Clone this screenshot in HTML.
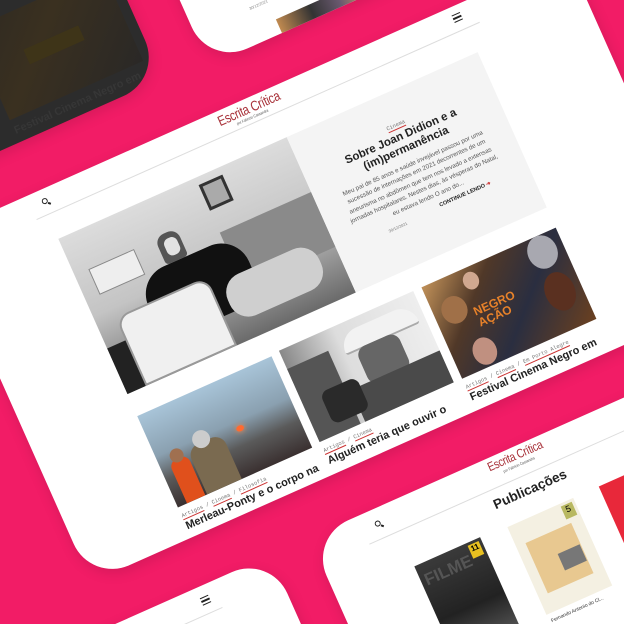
<!DOCTYPE html>
<html><head><meta charset="utf-8"><style>
*{margin:0;padding:0;box-sizing:border-box}
html,body{width:624px;height:624px;overflow:hidden;background:#F21C66}
body{position:relative;font-family:"Liberation Sans",sans-serif}
.clip{position:absolute;left:0;top:0;width:624px;height:624px;overflow:hidden}
.stage{position:absolute;left:0;top:0;width:624px;height:624px;transform:rotate(-24deg);transform-origin:312px 312px}
.card{position:absolute;background:#fff;border-radius:42px;overflow:hidden;box-shadow:0 4px 14px rgba(0,0,0,.12)}
.abs{position:absolute}
.logo{position:absolute;color:#a8323a;font-size:14px;letter-spacing:-.4px;white-space:nowrap;text-align:center;line-height:14px;transform:scaleX(.82)}
.logo small{display:block;font-size:4px;color:#555;line-height:5px;letter-spacing:0}
.line{position:absolute;height:1px;background:#ddd}
.tag{font-size:5.5px;color:#777;white-space:nowrap;font-family:"Liberation Mono",monospace}
.tag u{text-decoration:none;border-bottom:1px solid #c33}
.ttl{font-weight:bold;font-size:11px;color:#222;white-space:nowrap;overflow:hidden}
.ham{position:absolute;width:9px;height:8px;border-top:1.5px solid #222;border-bottom:1.5px solid #222}
.ham:after{content:"";position:absolute;left:0;right:0;top:2px;height:1.5px;background:#222}
.srch{position:absolute;width:6px;height:6px;border:1.6px solid #222;border-radius:50%}
.srch:after{content:"";position:absolute;width:3px;height:1.6px;background:#222;left:4px;top:5px;transform:rotate(45deg)}
</style></head><body>
<div class="clip">
<div class="stage">

<div class="card" style="left:-260px;top:-320px;width:530px;height:358px;background:#2c2c2c">
  <div class="abs" style="left:374px;top:235px;width:146px;height:99px;background:linear-gradient(135deg,#2f2a22,#3a3020 40%,#2a2826)"></div>
  <div class="abs" style="left:415px;top:275px;width:60px;height:16px;background:#3e3418"></div>
  <div class="abs ttl" style="left:374px;top:340px;color:#363636">Festival Cinema Negro em</div>
</div>

<div class="card" style="left:318px;top:-320px;width:380px;height:365px">
  <div class="abs" style="left:60px;top:327px;font-size:4px;color:#888">30/12/2021</div>
  <div class="abs" style="left:80px;top:350px;width:120px;height:20px;background:linear-gradient(90deg,#c08a50,#333 30%,#6a5a70 55%,#d0a060 80%,#333)"></div>
</div>

<div class="card" style="left:0;top:90px;width:690px;height:379px">
  <div class="srch" style="left:110px;top:9px"></div>
  <div class="logo" style="left:292px;top:3px;width:90px">Escrita Crítica<small>por Fabricio Cassandra</small></div>
  <div class="ham" style="left:560px;top:8px"></div>
  <div class="line" style="left:98px;top:25px;width:485px"></div>

  <div class="abs" style="left:110px;top:52px;width:250px;height:170px;overflow:hidden;background:linear-gradient(180deg,#dcdcdc,#c4c4c4 50%,#6a6a6a)">
    <div class="abs" style="left:150px;top:8px;width:26px;height:28px;border:3px solid #333;background:#aaa"></div>
    <div class="abs" style="left:15px;top:40px;width:50px;height:28px;background:#eee;border:1px solid #888"></div>
    <div class="abs" style="left:150px;top:60px;width:100px;height:60px;background:#8a8a8a"></div>
    <div class="abs" style="left:88px;top:38px;width:24px;height:30px;background:#555;border-radius:10px 10px 4px 4px"></div>
    <div class="abs" style="left:94px;top:44px;width:14px;height:18px;background:#e2e2e2;border-radius:6px"></div>
    <div class="abs" style="left:55px;top:68px;width:110px;height:70px;background:#111;border-radius:30px 30px 10px 10px"></div>
    <div class="abs" style="left:20px;top:95px;width:100px;height:75px;background:#f0f0f0;border-radius:14px 14px 0 0;border:2px solid #999"></div>
    <div class="abs" style="left:130px;top:105px;width:100px;height:45px;background:#cfcfcf;border-radius:20px"></div>
    <div class="abs" style="left:0;top:120px;width:20px;height:50px;background:#222"></div>
  </div>
  <div class="abs" style="left:360px;top:52px;width:209px;height:170px;background:#f4f4f4;text-align:center">
    <div class="tag" style="margin-top:30px"><u>Cinema</u></div>
    <div style="font-weight:bold;font-size:11.5px;color:#222;line-height:13px;margin-top:3px">Sobre Joan Didion e a<br>(im)permanência</div>
    <div style="font-size:6.3px;color:#555;line-height:9.4px;margin:5px 20px 0">Meu pai de 85 anos e saúde invejável passou por uma sucessão de internações em 2021 decorrentes de um aneurisma no abdômen que tem nos levado a extensas jornadas hospitalares. Nestes dias, às vésperas do Natal, eu estava lendo O ano do...</div>
    <div style="font-size:5.5px;margin-top:4px;position:relative;height:10px"><span style="position:absolute;left:55px;top:3px;font-size:4px;color:#777">30/12/2021</span><span style="position:absolute;left:112px;font-weight:bold;color:#222">CONTINUE LENDO <span style="color:#c33">➔</span></span></div>
  </div>

  <div class="abs" style="left:110px;top:246px;width:147px;height:100px;overflow:hidden;background:linear-gradient(180deg,#a8c4d8,#8aa0b0 45%,#5a5a5a 70%,#3a3030)">
    <div class="abs" style="left:85px;top:50px;width:8px;height:6px;background:#ff6a30;border-radius:50%;box-shadow:0 0 6px #f84"></div>
    <div class="abs" style="left:10px;top:55px;width:20px;height:45px;background:#e0501c;border-radius:8px 8px 0 0"></div>
    <div class="abs" style="left:13px;top:45px;width:14px;height:14px;background:#a07050;border-radius:50%"></div>
    <div class="abs" style="left:32px;top:50px;width:38px;height:50px;background:#7a6a50;border-radius:12px 12px 0 0"></div>
    <div class="abs" style="left:40px;top:38px;width:18px;height:18px;background:#ccc;border-radius:50%"></div>
  </div>
  <div class="tag abs" style="left:110px;top:352px"><u>Artigos</u> / <u>Cinema</u> / <u>Filosofia</u></div>
  <div class="ttl abs" style="left:110px;top:361px;width:150px">Merleau-Ponty e o corpo na</div>

  <div class="abs" style="left:266px;top:244px;width:147px;height:100px;overflow:hidden;background:linear-gradient(90deg,#888,#ddd 40%,#eee)">
    <div class="abs" style="left:0;top:20px;width:45px;height:80px;background:#555"></div>
    <div class="abs" style="left:60px;top:10px;width:80px;height:22px;background:#f2f2f2;border-radius:40px 40px 6px 6px;border-bottom:2px solid #aaa"></div>
    <div class="abs" style="left:70px;top:30px;width:45px;height:40px;background:#666;border-radius:10px"></div>
    <div class="abs" style="left:50px;top:65px;width:97px;height:35px;background:#4a4a4a"></div>
    <div class="abs" style="left:20px;top:55px;width:40px;height:35px;background:#2a2a2a;border-radius:8px"></div>
  </div>
  <div class="tag abs" style="left:266px;top:350px"><u>Artigos</u> / <u>Cinema</u></div>
  <div class="ttl abs" style="left:266px;top:359px;width:147px">Alguém teria que ouvir o</div>

  <div class="abs" style="left:422px;top:244px;width:147px;height:100px;overflow:hidden;background:linear-gradient(135deg,#c09058,#503828 30%,#2a2e40 60%,#6a4020)">
    <div class="abs" style="left:8px;top:20px;width:26px;height:28px;background:#a07048;border-radius:50%"></div>
    <div class="abs" style="left:40px;top:5px;width:16px;height:18px;background:#d0a890;border-radius:50%"></div>
    <div class="abs" style="left:110px;top:0;width:30px;height:34px;background:#a8a8b0;border-radius:50%"></div>
    <div class="abs" style="left:110px;top:40px;width:30px;height:40px;background:#5a3020;border-radius:50%"></div>
    <div class="abs" style="left:20px;top:70px;width:24px;height:28px;background:#c09080;border-radius:50%"></div>
    <div class="abs" style="left:38px;top:38px;font-weight:bold;font-size:12px;color:#e8822a;line-height:12px">NEGRO<br>AÇÃO</div>
  </div>
  <div class="tag abs" style="left:422px;top:350px"><u>Artigos</u> / <u>Cinema</u> / <u>Em Porto Alegre</u></div>
  <div class="ttl abs" style="left:422px;top:359px;width:150px">Festival Cinema Negro em</div>
</div>

<div class="card" style="left:-260px;top:517px;width:435px;height:400px">
  <div class="ham" style="left:353px;top:11px"></div>
  <div class="line" style="left:160px;top:28px;width:210px"></div>
</div>

<div class="card" style="left:218px;top:517px;width:680px;height:400px">
  <div class="srch" style="left:65px;top:12px"></div>
  <div class="logo" style="left:176px;top:2px;width:90px;font-size:12.5px">Escrita Crítica<small>por Fabricio Cassandra</small></div>
  <div class="line" style="left:52px;top:30px;width:560px"></div>
  <div class="abs" style="left:166px;top:38px;width:110px;text-align:center;font-weight:bold;font-size:13.5px;color:#222">Publicações</div>
  <div class="abs" style="left:84px;top:69px;width:72px;height:100px;background:linear-gradient(180deg,#3a3a3a,#222 60%,#555)">
    <div class="abs" style="right:3px;top:3px;width:12px;height:14px;background:#e8c020;font-size:8px;font-weight:bold;text-align:center">11</div>
    <div class="abs" style="left:4px;top:8px;font-size:17px;font-weight:bold;color:#555">FILME</div>
  </div>
  <div class="abs" style="left:185px;top:71px;width:72px;height:96px;background:#f4f0e2">
    <div class="abs" style="right:3px;top:3px;width:12px;height:14px;background:#b8b860;font-size:9px;text-align:center">5</div>
    <div class="abs" style="left:10px;top:22px;width:50px;height:55px;background:#e8c890"></div>
    <div class="abs" style="left:35px;top:45px;width:24px;height:18px;background:#777"></div>
  </div>
  <div class="abs" style="left:187px;top:172px;font-size:5px;color:#333;white-space:nowrap">Fernando Antonio do Cl...</div>
  <div class="abs" style="left:285px;top:71px;width:72px;height:96px;background:#e8283a"></div>
</div>

</div>
</div>
</body></html>
